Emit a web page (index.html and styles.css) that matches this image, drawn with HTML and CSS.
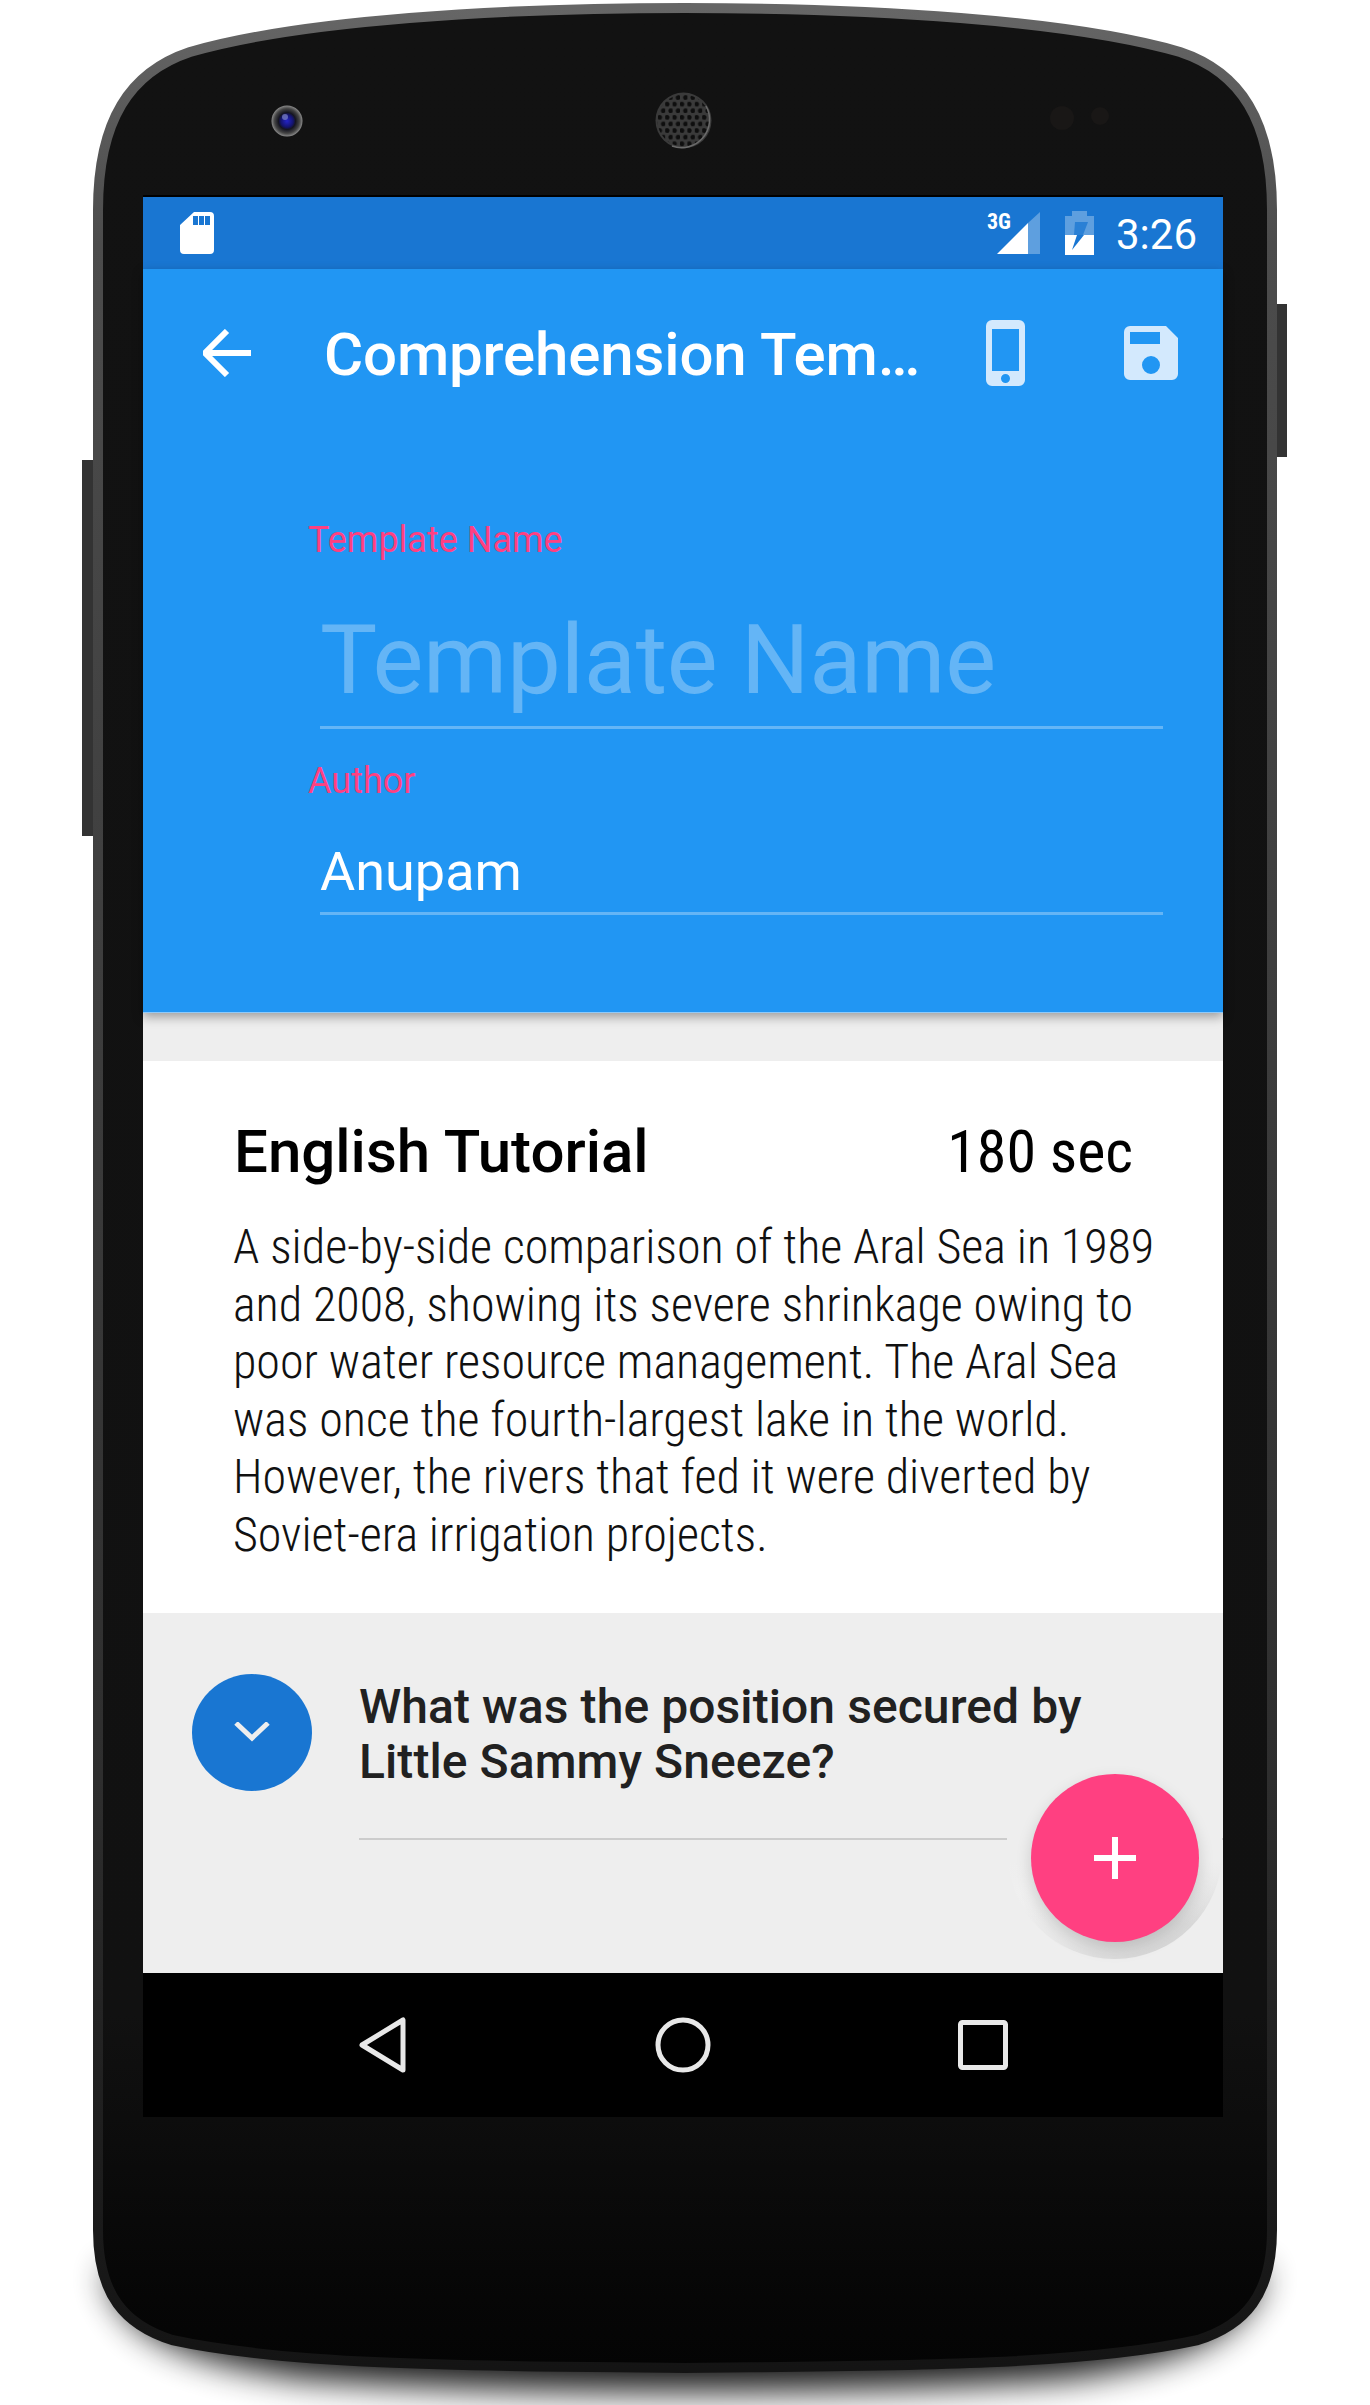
FILE: index.html
```html
<!DOCTYPE html>
<html lang="en">
<head>
    <meta charset="UTF-8">
    <meta name="viewport" content="width=device-width, initial-scale=1.0">
    <title>Comprehension Template</title>
    <link rel="stylesheet" href="styles.css">
</head>
<body>
    <div class="device">
        <!-- phone body, drawn behind the screen -->
        <svg class="device-frame" width="1370" height="2405" viewBox="0 0 1370 2405">
            <defs>
                <linearGradient id="rim" x1="0" y1="0" x2="0" y2="1">
                    <stop offset="0" stop-color="#666"/>
                    <stop offset="0.1" stop-color="#4c4c4c"/>
                    <stop offset="0.75" stop-color="#2e2e2e"/>
                    <stop offset="1" stop-color="#141414"/>
                </linearGradient>
                <linearGradient id="bodyFill" x1="0" y1="0" x2="0" y2="1">
                    <stop offset="0" stop-color="#121212"/>
                    <stop offset="0.85" stop-color="#111"/>
                    <stop offset="0.97" stop-color="#060606"/>
                    <stop offset="1" stop-color="#040404"/>
                </linearGradient>
                <radialGradient id="lens">
                    <stop offset="0" stop-color="#2424c8"/>
                    <stop offset="0.4" stop-color="#14146e"/>
                    <stop offset="0.55" stop-color="#151520"/>
                    <stop offset="0.8" stop-color="#444"/>
                    <stop offset="1" stop-color="#8a8a8a"/>
                </radialGradient>
                <pattern id="holes" width="7.4" height="13.2" patternUnits="userSpaceOnUse" x="680" y="114">
                    <circle cx="1.85" cy="3.3" r="2.4" fill="#0e0e0e"/>
                    <circle cx="5.55" cy="9.9" r="2.4" fill="#0e0e0e"/>
                </pattern>
                <filter id="blur" x="-20%" y="-30%" width="140%" height="160%">
                    <feGaussianBlur stdDeviation="17"/>
                </filter>
            </defs>
            <path class="device-shadow" d="M105 2270 C120 2330 170 2358 300 2378 C500 2396 870 2396 1070 2378 C1200 2358 1250 2330 1265 2270 Z"/>
            <rect class="side-key" x="82" y="460" width="14" height="376"/>
            <rect class="side-key" x="1274" y="304" width="13" height="153"/>
            <path class="device-body" d="M685 8 C500 8 300 20 190 52 C130 72 98 120 98 210 L98 2230 C98 2295 125 2325 172 2340 C300 2368 520 2366 685 2368 C850 2366 1070 2368 1198 2340 C1245 2325 1272 2295 1272 2230 L1272 210 C1272 120 1240 72 1180 52 C1070 20 870 8 685 8 Z"/>
            <circle cx="287" cy="121" r="15.5" fill="url(#lens)"/>
            <circle cx="285" cy="117" r="3" fill="#7f86c8" opacity="0.7"/>
            <circle cx="683.5" cy="120.5" r="28" fill="#3a3a3a"/>
            <circle cx="683.5" cy="120.5" r="26" fill="url(#holes)"/>
            <path d="M706 106 A28 28 0 0 1 672 146" fill="none" stroke="#6a6a6a" stroke-width="1.5"/>
            <circle cx="1062" cy="118" r="12" fill="#191716"/>
            <circle cx="1100" cy="116" r="9" fill="#191716"/>
        </svg>

        <div class="screen">
            <div class="status-bar">
                <svg width="34" height="42" viewBox="0 0 34 42">
                    <path fill="#fff" d="M14 0H30A4 4 0 0 1 34 4V38A4 4 0 0 1 30 42H4A4 4 0 0 1 0 38V13Z M13 4V13H18V4Z M19 4V13H24V4Z M25 4V13H30V4Z" fill-rule="evenodd"/>
                </svg>
                <div class="status-right">
                    <div class="signal">
                        <span class="network">3G</span>
                        <svg width="43" height="42" viewBox="0 0 43 42">
                            <path fill="#fff" opacity="0.3" d="M43 0V42H31V11Z"/>
                            <path fill="#fff" d="M31 11V42H0Z"/>
                        </svg>
                    </div>
                    <svg class="battery" width="29" height="44" viewBox="0 0 29 44">
                        <path fill="#fff" opacity="0.3" d="M7 0H22V5H29V24H0V5H7Z"/>
                        <path fill="#fff" d="M0 24H29V44H0Z"/>
                        <path fill="#1976d2" opacity="0.75" d="M10 11H23L18 24H9Z"/>
                        <path fill="#1976d2" d="M12 24H19L7 39Z"/>
                    </svg>
                    <span class="clock">3:26</span>
                </div>
            </div>

            <header class="app-header">
                <div class="toolbar">
                    <svg class="back-arrow" width="48" height="48" viewBox="0 0 48 48">
                        <path d="M48 24H4 M24 2L2 24L24 46" fill="none" stroke="#fff" stroke-width="6"/>
                    </svg>
                    <h1 class="toolbar-title">Comprehension Tem…</h1>
                    <svg class="toolbar-phone" width="39" height="66" viewBox="0 0 39 66">
                        <path fill="#d3e9fd" fill-rule="evenodd" d="M6 0H33A6 6 0 0 1 39 6V60A6 6 0 0 1 33 66H6A6 6 0 0 1 0 60V6A6 6 0 0 1 6 0Z M6 9V51H33V9Z M19.5 54A4.5 4.5 0 1 0 19.5 63A4.5 4.5 0 1 0 19.5 54Z"/>
                    </svg>
                    <svg class="toolbar-save" width="54" height="54" viewBox="0 0 54 54">
                        <path fill="#d3e9fd" fill-rule="evenodd" d="M6 0H42L54 12V48A6 6 0 0 1 48 54H6A6 6 0 0 1 0 48V6A6 6 0 0 1 6 0Z M6 6V18H36V6Z M27 30A9 9 0 1 0 27 48A9 9 0 1 0 27 30Z"/>
                    </svg>
                </div>
                <div class="form-fields">
                    <label class="field-label">Template Name</label>
                    <div class="field-input field-input-large">Template Name</div>
                    <label class="field-label field-label-second">Author</label>
                    <div class="field-input">Anupam</div>
                </div>
            </header>

            <div class="gap"></div>

            <section class="tutorial">
                <div class="tutorial-head">
                    <h2>English Tutorial</h2>
                    <span class="duration">180 sec</span>
                </div>
                <p class="tutorial-text">A side-by-side comparison of the Aral Sea in 1989<br>and 2008, showing its severe shrinkage owing to<br>poor water resource management. The Aral Sea<br>was once the fourth-largest lake in the world.<br>However, the rivers that fed it were diverted by<br>Soviet-era irrigation projects.</p>
            </section>

            <section class="question">
                <div class="expand-btn">
                    <svg width="36" height="22" viewBox="0 0 36 22">
                        <path d="M2 1L18 16L34 1" fill="none" stroke="#eee" stroke-width="5"/>
                    </svg>
                </div>
                <div class="question-body">
                    <p>What was the position secured by<br>Little Sammy Sneeze?</p>
                </div>
                <div class="fab-shade"></div>
                <div class="fab">
                    <svg width="42" height="42" viewBox="0 0 42 42">
                        <path d="M0 21H42 M21 0V42" stroke="#fff" stroke-width="6"/>
                    </svg>
                </div>
            </section>

            <nav class="nav-bar">
                <svg width="60" height="60" viewBox="0 0 60 60">
                    <path d="M50 5V55L9 30Z" fill="none" stroke="#e8e8e8" stroke-width="5" stroke-linejoin="round"/>
                </svg>
                <svg width="60" height="60" viewBox="0 0 60 60">
                    <circle cx="30" cy="30" r="25" fill="none" stroke="#e8e8e8" stroke-width="5"/>
                </svg>
                <svg width="60" height="60" viewBox="0 0 60 60">
                    <rect x="7.5" y="7.5" width="45" height="45" fill="none" stroke="#e8e8e8" stroke-width="5" rx="2"/>
                </svg>
            </nav>
        </div>
    </div>
</body>
</html>
```

FILE: styles.css
```css
* {
    box-sizing: border-box;
}

body {
    margin: 0;
    background: #fff;
    font-family: Roboto, "Liberation Sans", sans-serif;
}

h1, h2, p {
    margin: 0;
}

.device {
    position: relative;
    width: 1370px;
    height: 2405px;
    padding: 195px 147px 0 143px;
    overflow: hidden;
}

.device-frame {
    position: absolute;
    top: 0;
    left: 0;
}

.device-body {
    fill: url(#bodyFill);
    stroke: url(#rim);
    stroke-width: 10;
}

.device-shadow {
    fill: #000;
    opacity: 0.9;
    filter: url(#blur);
}

.side-key {
    fill: #333;
}

.screen {
    position: relative;
    border-top: 2px solid #000;
}

/* status bar */
.status-bar {
    display: flex;
    justify-content: space-between;
    align-items: center;
    height: 72px;
    padding: 0 26px 0 37px;
    background: #1976d2;
}

.status-right {
    display: flex;
    align-items: center;
}

.signal {
    position: relative;
    width: 53px;
    height: 42px;
    display: flex;
    justify-content: flex-end;
}

.network {
    position: absolute;
    top: 0;
    left: 0;
    color: #fff;
    font-size: 22px;
    line-height: 20px;
    font-weight: 700;
    font-stretch: 75%;
}

.battery {
    margin-left: 25px;
}

.clock {
    margin: 3px 0 0 22px;
    color: #fff;
    font-size: 42px;
}

/* blue header */
.app-header {
    position: relative;
    z-index: 1;
    height: 744px;
    background: #2196f3;
    border-bottom: 1px solid #90caf9;
    box-shadow: 0 4px 10px rgba(0, 0, 0, 0.35);
}

.toolbar {
    display: flex;
    align-items: center;
    height: 168px;
    padding-left: 60px;
}

.toolbar-title {
    width: 594px;
    margin: 3px 0 0 73px;
    color: #fff;
    font-size: 60px;
    font-weight: 500;
    font-stretch: 97.5%;
    letter-spacing: -0.15px;
    white-space: nowrap;
}

.toolbar-phone {
    margin-left: 68px;
}

.toolbar-save {
    margin-left: 99px;
}

.form-fields {
    padding: 82px 60px 0 165px;
}

.field-label {
    display: block;
    color: #ff4081;
    font-size: 36px;
    line-height: 42px;
    font-weight: 400;
    font-stretch: 96%;
}

.field-label-second {
    margin-top: 31px;
}

.field-input {
    margin: 38px 0 0 12px;
    padding: 0 0 8px;
    color: #fff;
    font-size: 54px;
    line-height: 64px;
    border-bottom: 3px solid #64b5f6;
}

.field-input-large {
    margin-top: 43px;
    padding-bottom: 10px;
    color: #64b5f6;
    font-size: 96px;
    line-height: 112px;
    font-weight: 400;
    font-stretch: 96.5%;
    letter-spacing: -0.25px;
}

.gap {
    height: 48px;
    background: #eee;
}

/* tutorial card */
.tutorial {
    height: 552px;
    padding: 56px 90px 0 91px;
    background: #fff;
}

.tutorial-head {
    display: flex;
    justify-content: space-between;
    color: #000;
    line-height: 70px;
}

.tutorial-head h2 {
    font-size: 60px;
    font-weight: 500;
}

.duration {
    font-size: 60px;
    font-stretch: 87%;
}

.tutorial-text {
    margin: 31px 0 0 -1px;
    color: #111;
    font-size: 48px;
    line-height: 57.6px;
    font-weight: 300;
    font-stretch: 75%;
    white-space: nowrap;
}

/* question row */
.question {
    position: relative;
    display: flex;
    height: 360px;
    padding: 61px 0 0 49px;
    background: #eee;
}

.expand-btn {
    display: flex;
    justify-content: center;
    align-items: center;
    flex: none;
    width: 120px;
    height: 117px;
    border-radius: 50%;
    background: #1976d2;
}

.question-body {
    flex: 1;
    margin-left: 47px;
    height: 166px;
    padding-top: 5px;
    border-bottom: 2px solid #ccc;
}

.question-body p {
    color: #212121;
    font-size: 48px;
    line-height: 55px;
    font-weight: 500;
    letter-spacing: 0.08px;
    white-space: nowrap;
}

.fab-shade {
    position: absolute;
    top: 206px;
    left: 864px;
    width: 215px;
    height: 140px;
    border-radius: 0 0 108px 108px;
    background: linear-gradient(#eee 30%, rgba(238, 238, 238, 0) 75%), linear-gradient(150deg, #f1f1f1 30%, #e6e6e6 60%, #d2d2d2 90%);
}

.fab {
    position: absolute;
    top: 161px;
    left: 888px;
    display: flex;
    justify-content: center;
    align-items: center;
    width: 168px;
    height: 168px;
    border-radius: 50%;
    background: #ff4081;
    box-shadow: 0 6px 16px rgba(0, 0, 0, 0.15);
}

/* bottom navigation */
.nav-bar {
    display: flex;
    justify-content: center;
    align-items: center;
    gap: 240px;
    height: 144px;
    background: #000;
}
```
